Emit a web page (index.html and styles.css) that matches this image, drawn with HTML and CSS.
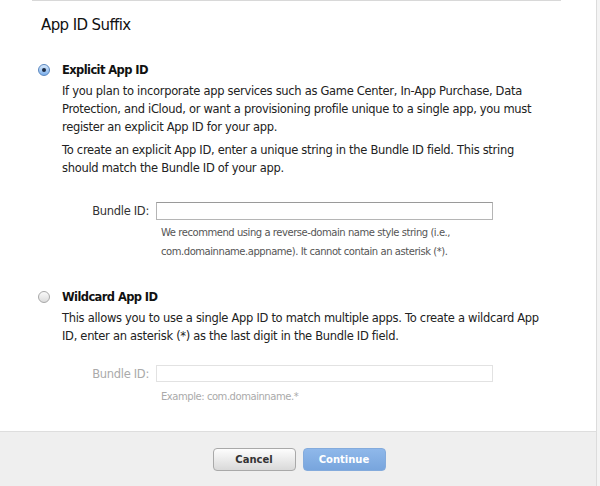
FILE: index.html
```html
<!DOCTYPE html>
<html>
<head>
<meta charset="utf-8">
<link rel="stylesheet" href="styles.css">
</head>
<body>
<div class="page">
  <div class="panel">
    <div class="content">
      <div class="topline"></div>
      <h2 class="title">App ID Suffix</h2>

      <div class="option">
        <div class="option-head">
          <span class="radio radio-on"><span class="dot"></span></span>
          <span class="option-title">Explicit App ID</span>
        </div>
        <div class="option-body">
          <p class="desc">If you plan to incorporate app services such as Game Center, In-App Purchase, Data Protection, and iCloud, or want a provisioning profile unique to a single app, you must register an explicit App ID for your app.</p>
          <p class="desc gap">To create an explicit App ID, enter a unique string in the Bundle ID field. This string should match the Bundle ID of your app.</p>
        </div>
        <div class="field">
          <label class="field-label">Bundle ID:</label>
          <div class="field-main">
            <div class="input"></div>
            <p class="hint">We recommend using a reverse-domain name style string (i.e., com.domainname.appname). It cannot contain an asterisk (*).</p>
          </div>
        </div>
      </div>

      <div class="option option2">
        <div class="option-head">
          <span class="radio radio-off"></span>
          <span class="option-title">Wildcard App ID</span>
        </div>
        <div class="option-body">
          <p class="desc">This allows you to use a single App ID to match multiple apps. To create a wildcard App ID, enter an asterisk (*) as the last digit in the Bundle ID field.</p>
        </div>
        <div class="field field-disabled">
          <label class="field-label">Bundle ID:</label>
          <div class="field-main">
            <div class="input"></div>
            <p class="hint">Example: com.domainname.*</p>
          </div>
        </div>
      </div>
    </div>
    <div class="footer">
      <button class="btn btn-cancel">Cancel</button>
      <button class="btn btn-continue">Continue</button>
    </div>
  </div>
  <div class="gutter"></div>
</div>
</body>
</html>
```
FILE: styles.css
```css
* { box-sizing: border-box; }
html, body { margin: 0; padding: 0; }
body {
  width: 600px;
  height: 486px;
  overflow: hidden;
  font-family: "DejaVu Sans", "Noto Sans", sans-serif;
  color: #222;
  background: #fff;
}
.page {
  display: flex;
  height: 486px;
}
.panel {
  width: 597px;
  display: flex;
  flex-direction: column;
  border-right: 1px solid #dcdcdc;
}
.gutter {
  flex: 1;
  background: #f4f4f4;
}
.content {
  flex: 1;
  padding: 0 0 0 32px;
}
.topline {
  width: 529px;
  height: 1px;
  background: #d8d8d8;
}
.title {
  margin: 14px 0 0 9px;
  font-size: 15px;
  letter-spacing: -0.6px;
  font-weight: normal;
  color: #111;
  line-height: 20px;
}
.option {
  margin-top: 26px;
}
.option2 {
  margin-top: 27px;
}
.option-head {
  display: flex;
  align-items: center;
  height: 18px;
}
.radio {
  width: 12px;
  height: 12px;
  border-radius: 50%;
  margin-left: 6px;
  margin-right: 12px;
  display: flex;
  align-items: center;
  justify-content: center;
}
.radio-on {
  background: linear-gradient(#d6e8fb, #7db0ec);
  border: 1px solid #5a87c0;
}
.radio-on .dot {
  width: 4px;
  height: 4px;
  border-radius: 50%;
  background: #1c2b44;
}
.radio-off {
  background: linear-gradient(#fafafa, #dcdcdc);
  border: 1px solid #a8a8a8;
}
.option-title {
  font-size: 11.5px;
  letter-spacing: -0.6px;
  font-weight: bold;
  color: #111;
}
.option-body {
  margin-left: 30px;
  width: 490px;
}
.desc {
  margin: 3px 0 0;
  font-size: 11.5px;
  letter-spacing: -0.3px;
  line-height: 18px;
  color: #222;
}
.desc.gap {
  margin-top: 5px;
}
.field {
  display: flex;
  margin-top: 25px;
}
.option2 .field {
  margin-top: 20px;
}
.field-label {
  width: 124px;
  text-align: right;
  font-size: 11.5px;
  letter-spacing: -0.3px;
  line-height: 18px;
  color: #333;
  padding-right: 7px;
}
.field-main {
  width: 337px;
}
.input {
  height: 18px;
  border: 1px solid #b5b5b5;
  border-top-color: #9a9a9a;
  background: #fff;
}
.hint {
  margin: 3px 0 0 5px;
  font-size: 10px;
  letter-spacing: -0.45px;
  line-height: 19px;
  color: #555;
}
.field-disabled .field-label { color: #aaa; }
.field-disabled .input { border-color: #e2e2e2; height: 17px; }
.field-disabled .hint { color: #aaa; margin-top: 5px; }
.footer {
  height: 55px;
  background: #efefef;
  border-top: 1px solid #dedede;
  display: flex;
  justify-content: center;
  align-items: center;
  gap: 7px;
  padding-left: 2px;
}
.btn {
  width: 83px;
  height: 23px;
  border-radius: 4px;
  font-family: "DejaVu Sans", sans-serif;
  font-size: 10px;
  font-weight: bold;
  padding: 0;
}
.btn-cancel {
  background: linear-gradient(#fdfdfd, #d9d9d9);
  border: 1px solid #a9a9a9;
  color: #333;
}
.btn-continue {
  background: linear-gradient(#8fb8ea, #78a5dd);
  border: 1px solid #84abdc;
  color: #fff;
}
```
